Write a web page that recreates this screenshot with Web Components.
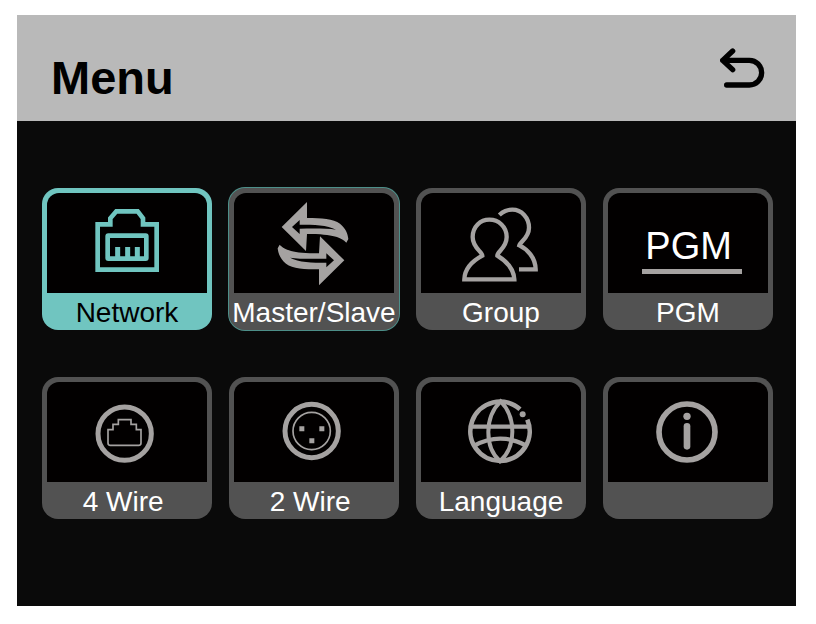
<!DOCTYPE html>
<html lang="en">
<head>
<meta charset="utf-8">
<meta name="viewport" content="width=device-width, initial-scale=1">
<title>Menu</title>
<style>
  body {
    margin: 0;
    background: #ffffff;
    font-family: "Liberation Sans", Arial, sans-serif;
  }
</style>
</head>
<body>
<menu-screen>
  <menu-header slot="header">Menu</menu-header>
  <menu-tile icon="network" state="active">Network</menu-tile>
  <menu-tile icon="swap" state="focused">Master/Slave</menu-tile>
  <menu-tile icon="group">Group</menu-tile>
  <menu-tile icon="pgm">PGM</menu-tile>
  <menu-tile icon="fourwire">4 Wire </menu-tile>
  <menu-tile icon="twowire">2 Wire </menu-tile>
  <menu-tile icon="language">Language</menu-tile>
  <menu-tile icon="info" label="Information"></menu-tile>
</menu-screen>

<script>
// Icons share one 480x300 canvas, the size of a tile's panel times three
const ICONS = {
  network: `
    <g class="soft" fill="none" stroke="currentColor" stroke-width="14">
      <path d="M152 230V94H190V76L208 55H272L288 76V94H329V230Z"/>
      <rect x="182" y="128" width="116" height="69" rx="2"/>
      <path d="M212 162V194M242 162V194M271 162V194" stroke-width="15"/>
    </g>`,
  swap: `
    <defs>
      <path id="arrow" fill-rule="evenodd" d="M143 102L219 27V75C262 75 298 77 318 92C334 105 341 120 343 138L337 149C322 134 300 123 219 123L216 174ZM174 102L197 81V95C240 95 280 96 306 110C280 106 240 106 197 107V123Z"/>
    </defs>
    <g fill="currentColor">
      <use href="#arrow"/>
      <use href="#arrow" transform="rotate(180 237 152)"/>
    </g>`,
  group: `
    <g class="soft" fill="none" stroke="currentColor" stroke-width="13">
      <path d="M130 259C131 222 158 202 184 188C184 176 155 165 155 132C155 101 178 80 205 80C233 80 257 101 257 132C257 165 228 176 229 188C252 202 278 222 280 259Z"/>
      <path d="M235 66C248 54 260 50 274 50C302 50 324 74 324 104C324 134 298 146 295 157C318 168 343 192 344 229H294"/>
    </g>`,
  pgm: `
    <text x="112" y="197" font-size="114" fill="#ffffff">PGM</text>
    <rect x="102" y="228" width="300" height="15" fill="currentColor"/>`,
  fourwire: `
    <g fill="none" stroke="currentColor">
      <circle cx="233" cy="155" r="80" stroke-width="15"/>
      <path d="M183 143H198V127H214V113H252V127H268V143H282V183Q282 190 275 190H190Q183 190 183 183Z" stroke-width="5"/>
    </g>`,
  twowire: `
    <g fill="none" stroke="currentColor">
      <circle cx="233" cy="147" r="80" stroke-width="15"/>
      <circle cx="233" cy="147" r="56" stroke-width="5"/>
    </g>
    <path fill="currentColor" d="M196 133h15v15h-15zM256 133h15v15h-15zM226 169h15v15h-15z"/>`,
  language: `
    <g class="soft" fill="none" stroke="currentColor" stroke-width="14">
      <path d="M297 82A89 89 0 1 0 319 113"/>
      <path d="M239 58C190 105 190 195 237 238C286 195 286 105 239 58Z" stroke-width="12"/>
      <path d="M150 134H326M158 192Q237 148 318 192" stroke-width="13"/>
      <circle cx="305" cy="97" r="9" fill="currentColor" stroke="none"/>
    </g>`,
  info: `
    <g class="soft" fill="none" stroke="currentColor" stroke-width="17">
      <circle cx="237" cy="150" r="84"/>
      <path d="M237 133V193" stroke-width="20" stroke-linecap="round"/>
      <circle cx="237" cy="103" r="11" fill="currentColor" stroke="none"/>
    </g>`
};

class MenuScreen extends HTMLElement {
  connectedCallback() {
    this.attachShadow({ mode: 'open' });
    this.shadowRoot.innerHTML = `
      <style>
        :host {
          display: block;
          margin: 15px 20px 18px 17px;
          background: #0a0a0a;
        }
        nav {
          display: grid;
          grid-template-columns: repeat(4, minmax(0, 1fr));
          gap: 47px 17px;
          padding: 67px 23px 87px 25px;
        }
      </style>
      <slot name="header"></slot>
      <nav aria-label="Menu"><slot></slot></nav>
    `;
  }
}

class MenuHeader extends HTMLElement {
  connectedCallback() {
    this.attachShadow({ mode: 'open' });
    this.shadowRoot.innerHTML = `
      <style>
        :host {
          display: block;
          background: #b9b9b9;
          color: #000000;
        }
        header {
          display: flex;
          align-items: center;
          justify-content: space-between;
          min-height: 106px;
          padding: 0 31px 0 34px;
        }
        h1 {
          margin: 0;
          padding-top: 19px;
          font-size: 47px;
          line-height: 56px;
          font-weight: bold;
        }
        button {
          display: flex;
          padding: 0;
          border: 0;
          background: none;
          color: inherit;
          cursor: pointer;
        }
      </style>
      <header>
        <h1><slot></slot></h1>
        <button type="button" aria-label="Back">
          <svg width="45" height="40" viewBox="0 0 135 120" fill="none" stroke="currentColor" stroke-width="16" stroke-linecap="round" stroke-linejoin="round">
            <path d="M38 9L8 37L38 65M8 37H88A37 37 0 0 1 88 111H20"/>
          </svg>
        </button>
      </header>
    `;
  }
}

class MenuTile extends HTMLElement {
  connectedCallback() {
    const icon = ICONS[this.getAttribute('icon')] || '';
    const label = this.getAttribute('label');
    this.attachShadow({ mode: 'open' });
    this.shadowRoot.innerHTML = `
      <style>
        :host {
          --frame: #525252;
          --text: #ffffff;
          --icon: #a5a2a1;
          display: block;
        }
        :host([state="active"]) {
          --frame: #70c5c0;
          --text: #000000;
          --icon: #70c5c0;
        }
        :host([state="focused"]) button {
          box-shadow: 0 0 0 1px #4d8f89;
        }
        button {
          display: flex;
          flex-direction: column;
          width: 100%;
          padding: 0;
          border: 0;
          border-radius: 16px;
          background: var(--frame);
          color: var(--text);
          font: inherit;
          cursor: pointer;
        }
        .panel {
          display: flex;
          justify-content: center;
          height: 100px;
          margin: 5px 5px 0;
          border-radius: 12px 12px 0 0;
          background: #020000;
          color: var(--icon);
        }
        svg {
          width: 160px;
          height: 100px;
        }
        .soft {
          filter: blur(2px);
        }
        .label {
          display: flex;
          justify-content: center;
          height: 37px;
          font-size: 28px;
          line-height: 39px;
          white-space: pre;
        }
      </style>
      <button type="button"${label ? ` aria-label="${label}"` : ''}>
        <span class="panel">
          <svg viewBox="0 0 480 300" aria-hidden="true">${icon}</svg>
        </span>
        <span class="label"><slot></slot></span>
      </button>
    `;
  }
}

customElements.define('menu-screen', MenuScreen);
customElements.define('menu-header', MenuHeader);
customElements.define('menu-tile', MenuTile);
</script>
</body>
</html>
